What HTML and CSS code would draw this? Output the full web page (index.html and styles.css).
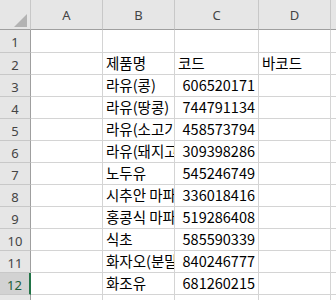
FILE: index.html
```html
<!DOCTYPE html>
<html>
<head>
<meta charset="utf-8">
<link rel="stylesheet" href="styles.css">
</head>
<body>
<div class="sheet">
  <div class="hdr corner"><svg class="tri" width="13" height="13" viewBox="0 0 13 13"><polygon points="13,0 13,13 0,13" fill="#b3b3b3"/></svg></div>
  <div class="hdr col">A</div>
  <div class="hdr col">B</div>
  <div class="hdr col">C</div>
  <div class="hdr col">D</div>
  <div class="hdr col last"></div>

  <div class="hdr rowh r1">1</div><div class="cell r1"></div><div class="cell r1"></div><div class="cell r1"></div><div class="cell r1"></div><div class="cell r1 last"></div>

  <div class="hdr rowh">2</div><div class="cell"></div><div class="cell">제품명</div><div class="cell">코드</div><div class="cell">바코드</div><div class="cell last"></div>
  <div class="hdr rowh">3</div><div class="cell"></div><div class="cell">라유(콩)</div><div class="cell num">606520171</div><div class="cell"></div><div class="cell last"></div>
  <div class="hdr rowh">4</div><div class="cell"></div><div class="cell">라유(땅콩)</div><div class="cell num">744791134</div><div class="cell"></div><div class="cell last"></div>
  <div class="hdr rowh">5</div><div class="cell"></div><div class="cell">라유(소고기)</div><div class="cell num">458573794</div><div class="cell"></div><div class="cell last"></div>
  <div class="hdr rowh">6</div><div class="cell"></div><div class="cell">라유(돼지고기)</div><div class="cell num">309398286</div><div class="cell"></div><div class="cell last"></div>
  <div class="hdr rowh">7</div><div class="cell"></div><div class="cell">노두유</div><div class="cell num">545246749</div><div class="cell"></div><div class="cell last"></div>
  <div class="hdr rowh">8</div><div class="cell"></div><div class="cell">시추안 마파</div><div class="cell num">336018416</div><div class="cell"></div><div class="cell last"></div>
  <div class="hdr rowh">9</div><div class="cell"></div><div class="cell">홍콩식 마파</div><div class="cell num">519286408</div><div class="cell"></div><div class="cell last"></div>
  <div class="hdr rowh">10</div><div class="cell"></div><div class="cell">식초</div><div class="cell num">585590339</div><div class="cell"></div><div class="cell last"></div>
  <div class="hdr rowh">11</div><div class="cell"></div><div class="cell">화자오(분말)</div><div class="cell num">840246777</div><div class="cell"></div><div class="cell last"></div>
  <div class="hdr rowh sel">12</div><div class="cell"></div><div class="cell">화조유</div><div class="cell num">681260215</div><div class="cell"></div><div class="cell last"></div>
  <div class="hdr rowh"></div><div class="cell"></div><div class="cell"></div><div class="cell"></div><div class="cell"></div><div class="cell last"></div>
</div>
</body>
</html>
```

FILE: styles.css
```css
html, body {
  margin: 0;
  padding: 0;
  background: #ffffff;
  overflow: hidden;
}
.sheet {
  display: grid;
  grid-template-columns: 31px 72px 72px 84px 72px 20px;
  grid-template-rows: 30px 23px repeat(12, 22px);
  width: 336px;
  height: 300px;
  overflow: hidden;
}
.hdr {
  background: #e6e6e6;
  color: #444444;
  font-family: "Noto Sans", "Open Sans", sans-serif;
  font-size: 13px;
  display: flex;
  align-items: center;
  justify-content: center;
  box-sizing: border-box;
  border-right: 1px solid #c8c8c8;
  border-bottom: 1px solid #c8c8c8;
}
.corner {
  border-right: 1px solid #c8c8c8;
  border-bottom: 1px solid #9f9f9f;
  align-items: flex-end;
  justify-content: flex-end;
  padding: 0 3px 2px 0;
}
.tri {
  display: block;
}
.col {
  border-bottom: 1px solid #9f9f9f;
  padding-top: 1px;
}
.rowh {
  border-right: 1px solid #9f9f9f;
  padding-top: 2px;
}
.rowh.sel {
  background: #d2d2d2;
  color: #1e5e3a;
  border-right: 2px solid #217346;
}
.cell {
  box-sizing: border-box;
  border-right: 1px solid #d4d4d4;
  border-bottom: 1px solid #d4d4d4;
  font-family: "Noto Sans CJK KR", "Noto Sans", sans-serif;
  font-size: 14.5px;
  color: #000000;
  white-space: nowrap;
  overflow: hidden;
  padding: 0 3px;
  display: flex;
  align-items: center;
  line-height: 1;
}
.num {
  justify-content: flex-end;
}
.last {
  border-right: none;
}
```
